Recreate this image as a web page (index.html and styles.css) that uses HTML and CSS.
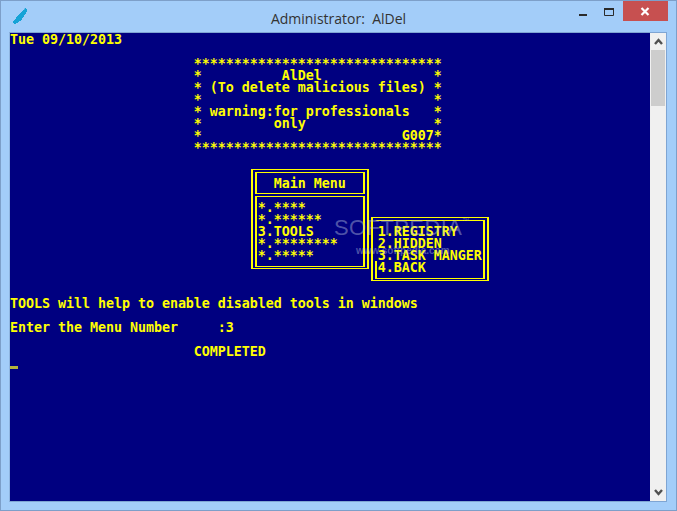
FILE: index.html
```html
<!DOCTYPE html>
<html lang="en">
<head>
<meta charset="utf-8">
<title>Administrator: AlDel</title>
<link rel="stylesheet" href="styles.css">
</head>
<body>
<div class="window">
  <header class="titlebar">
    <svg class="app-icon" width="14" height="17" viewBox="0 0 14 17"><path d="M12 0h1v1h1v3h-1v2h-1v1h-1v2h-1v1h-1v2H8v1H6v1H5v1H3v1H1v-1H0v-2h1v-1h1v-1h1V9h1V8h1V7h1V6h1V5h1V4h1V3h1V2h1z" fill="#16a3d6"/></svg>
    <div class="title">Administrator:&nbsp; AlDel</div>
    <div class="controls">
      <div class="ctl"><svg width="9" height="3" viewBox="0 0 9 3"><rect width="8" height="2" y="0" fill="#2b2b2b"/></svg></div>
      <div class="ctl ctl-max"><svg width="11" height="9" viewBox="0 0 11 9"><path d="M.5.5h9v7h-9z" fill="none" stroke="#2b2b2b"/><rect width="10" height="2" fill="#2b2b2b"/></svg></div>
      <div class="ctl ctl-close"><svg width="11" height="9" viewBox="0 0 11 9"><path d="M1.5 1l7 7M8.5 1l-7 7" stroke="#fff" stroke-width="2.2" fill="none"/></svg></div>
    </div>
  </header>
  <main class="client">
    <div class="screen">
      <div class="box box-main"><div class="inner inner-title"></div><div class="inner inner-menu"></div></div>
      <div class="box box-sub"><div class="inner inner-sub"></div></div>
      <div class="console">
        <div class="row">Tue 09/10/2013</div>
        <div class="row"></div>
        <div class="row">                       *******************************</div>
        <div class="row">                       *          AlDel              *</div>
        <div class="row">                       * (To delete malicious files) *</div>
        <div class="row">                       *                             *</div>
        <div class="row">                       * warning:for professionals   *</div>
        <div class="row">                       *         only                *</div>
        <div class="row">                       *                         G007*</div>
        <div class="row">                       *******************************</div>
        <div class="row"></div>
        <div class="row"></div>
        <div class="row">                                 Main Menu</div>
        <div class="row"></div>
        <div class="row">                               *.****</div>
        <div class="row">                               *.******</div>
        <div class="row">                               3.TOOLS        1.REGISTRY</div>
        <div class="row">                               *.********     2.HIDDEN</div>
        <div class="row">                               *.*****        3.TASK MANGER</div>
        <div class="row">                                              4.BACK</div>
        <div class="row"></div>
        <div class="row"></div>
        <div class="row">TOOLS will help to enable disabled tools in windows</div>
        <div class="row"></div>
        <div class="row">Enter the Menu Number     :3</div>
        <div class="row"></div>
        <div class="row">                       COMPLETED</div>
      </div>
      <div class="cursor"></div>
      <div class="watermark"><div class="wm-name">SOFTPEDIA<sup class="wm-tm">™</sup></div><div class="wm-url">www.softpedia.com</div></div>
    </div>
    <aside class="scrollbar">
      <div class="arrow"><svg width="9" height="7" viewBox="0 0 9 7"><path d="M1 6l3.5-4L8 6" fill="none" stroke="#505050" stroke-width="2.4"/></svg></div>
      <div class="track"><div class="thumb"></div></div>
      <div class="arrow"><svg width="9" height="7" viewBox="0 0 9 7"><path d="M1 1l3.5 4L8 1" fill="none" stroke="#505050" stroke-width="2.4"/></svg></div>
    </aside>
  </main>
</div>
</body>
</html>
```
FILE: styles.css
```css
* { box-sizing: border-box; }
html, body { margin: 0; padding: 0; height: 100%; overflow: hidden; background: #a3cdf9; }
.window {
  width: 677px;
  height: 511px;
  background: #a3cdf9;
  border: 1px solid #7d9fc9;
  display: flex;
  flex-direction: column;
}
.titlebar {
  height: 31px;
  flex: none;
  display: flex;
  align-items: flex-start;
  position: relative;
  padding-left: 12px;
}
.app-icon { margin-top: 7px; flex: none; }
.title {
  position: absolute;
  left: 0;
  right: 0;
  top: 8px;
  text-align: center;
  font: 14px/20px "Open Sans", "Noto Sans", sans-serif;
  color: #333;
}
.controls { margin-left: auto; display: flex; margin-right: 8px; }
.ctl {
  width: 26px;
  height: 20px;
  display: flex;
  align-items: center;
  justify-content: center;
  padding-top: 8px;
}
.ctl-max { padding-top: 2px; width: 27px; }
.ctl-close {
  width: 45px;
  background: #c75050;
  padding-top: 1px;
}
.client {
  flex: none;
  margin-left: 8px;
  width: 658px;
  height: 470px;
  display: flex;
  border: 1px solid #7fa5d3;
  border-left-color: #8fb5e0;
  border-bottom: 1px solid #7fa5d3;
}
.screen {
  position: relative;
  width: 640px;
  height: 468px;
  background: #000080;
  overflow: hidden;
  flex: none;
}
.console {
  position: relative;
  padding-top: 1px;
  font: bold 13.33px/12px "DejaVu Sans Mono", monospace;
  letter-spacing: -0.03px;
  color: #ffff00;
}
.row { height: 12px; white-space: pre; }
.box, .inner { position: absolute; border: solid #ffff00; border-width: 1px 2px; }
.box-main { left: 241px; top: 136px; width: 118px; height: 100px; }
.inner-title { left: 2px; top: 2px; width: 110px; height: 22px; }
.inner-menu { left: 2px; top: 26px; width: 110px; height: 71px; }
.box-sub { left: 361px; top: 184px; width: 118px; height: 64px; }
.inner-sub { left: 2px; top: 2px; width: 110px; height: 59px; border-left-color: transparent; }
.inner-sub::after {
  content: "";
  position: absolute;
  left: -2px;
  bottom: -1px;
  width: 2px;
  height: 18px;
  background: #ffff00;
}
.cursor {
  position: absolute;
  left: 0;
  top: 333px;
  width: 8px;
  height: 3px;
  background: #b5b53c;
}
.watermark {
  position: absolute;
  left: 324px;
  top: 183px;
  width: 135px;
  color: rgba(190, 200, 225, 0.42);
  font-family: "Liberation Sans", sans-serif;
}
.wm-name { font-size: 22px; line-height: 24px; letter-spacing: 0.4px; white-space: nowrap; }
.wm-tm { font-size: 7px; line-height: 0; vertical-align: 12px; }
.wm-url { font-size: 10px; line-height: 12px; margin: 5px 0 0 22px; font-weight: bold; white-space: nowrap; }
.scrollbar {
  width: 17px;
  height: 468px;
  background: #f0f0f0;
  display: flex;
  flex-direction: column;
}
.arrow { height: 17px; flex: none; display: flex; align-items: center; justify-content: center; }
.track { flex: 1; }
.thumb { margin: 0 1px; height: 56px; background: #cdcdcd; }
```
